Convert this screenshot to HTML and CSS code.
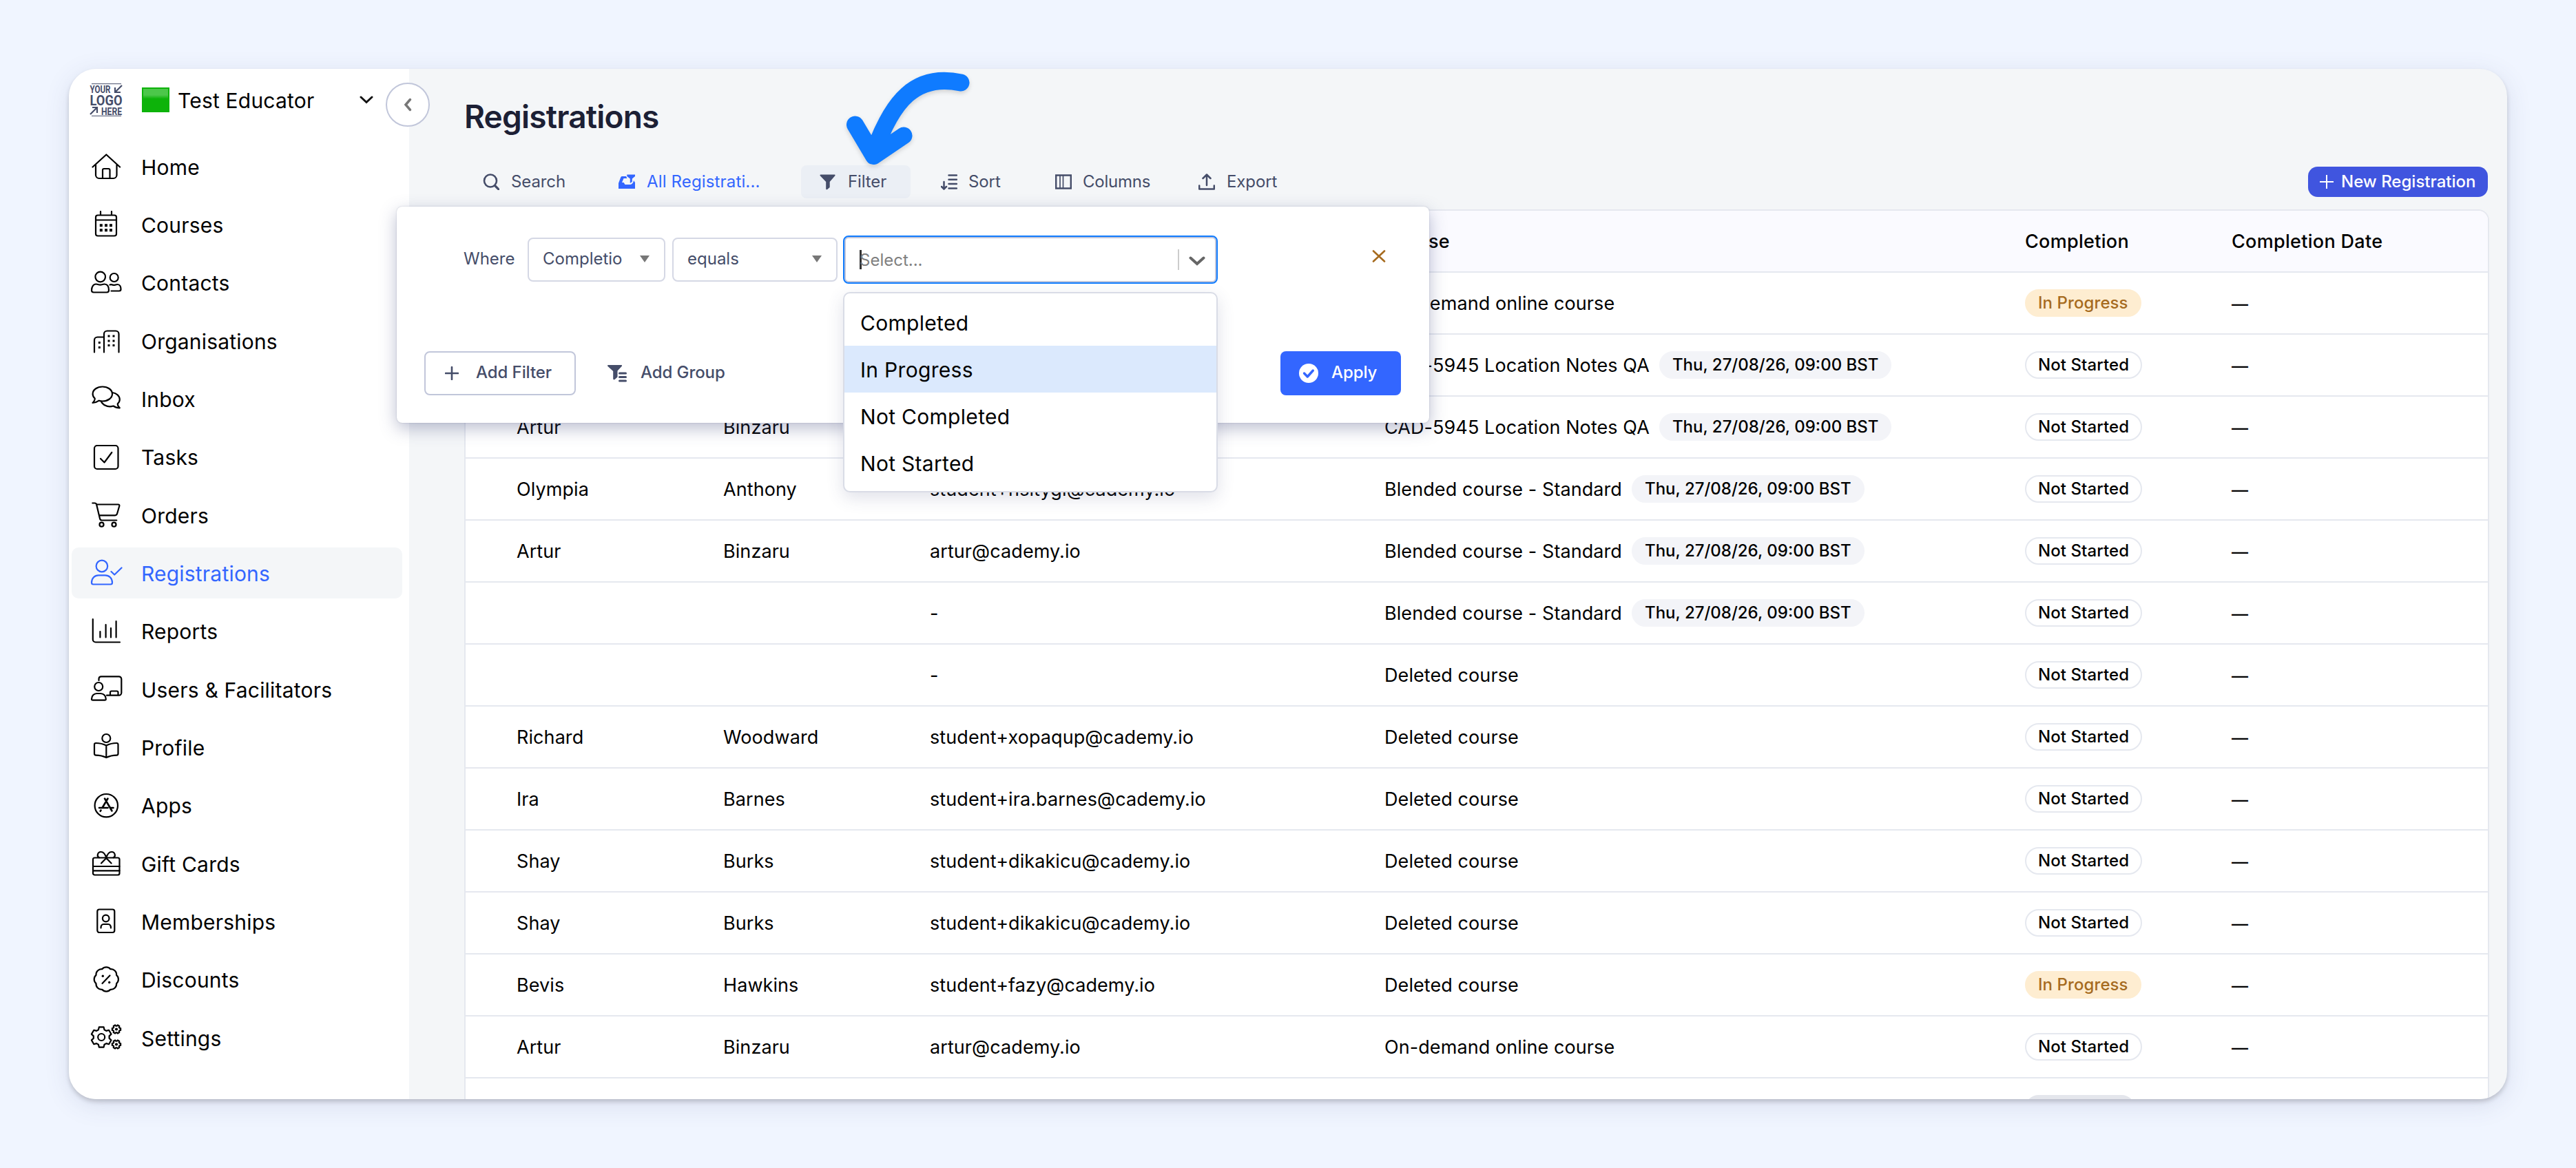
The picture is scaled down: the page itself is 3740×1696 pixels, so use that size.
FILE: index.html
```html
<!DOCTYPE html>
<html lang="en">
<head>
    <meta charset="UTF-8">
    <meta name="viewport" content="width=device-width, initial-scale=1.0">
    <title>Registrations</title>
    <link rel="stylesheet" href="styles.css">
</head>
<body>
    <div class="app">
        <div class="sidebar">
            <div class="brand">
                <svg class="logo" viewBox="0 0 48 48">
                    <path d="M3 .7h43M3 47.300h43" stroke-width="1"/>
                    <text x="0.500" y="14" textLength="30" lengthAdjust="spacingAndGlyphs" font-size="14.500">YOUR</text>
                    <text x="0.500" y="32" textLength="47" lengthAdjust="spacingAndGlyphs" font-size="21">LOGO</text>
                    <text x="17" y="45.500" textLength="30" lengthAdjust="spacingAndGlyphs" font-size="14.500">HERE</text>
                    <path d="M47 3L37 13M37 6v7h8M1 45L11 35M4 35h7v8" stroke-width="2.2"/>
                </svg>
                <span class="flag"></span>
                <span class="brand-name">Test Educator</span>
                <svg class="brand-arrow" viewBox="0 0 20 12"><path d="M2 2l8 7.5L18 2"/></svg>
            </div>
            <div class="nav">
                <div class="nav-item">
                    <svg viewBox="0 0 48 48"><path d="M4.500 24.500L24.300 6.500l19.800 18M9 21v15a5 5 0 0 0 5 5h20.500a5 5 0 0 0 5-5V21M19 41V29a2 2 0 0 1 2-2h6.500a2 2 0 0 1 2 2v12"/></svg>
                    <span>Home</span>
                </div>
                <div class="nav-item">
                    <svg viewBox="0 0 48 48"><rect x="9" y="10.500" width="30" height="30" rx="3"/><path d="M9 17.500h30M16 10V5M32 10V5"/><path d="M14.800 23.300h4v4h-4zM22 23.300h4v4h-4zM29 23.300h4v4h-4zM14.800 30.300h4v4h-4zM22 30.300h4v4h-4zM29 30.300h4v4h-4z" class="solid"/></svg>
                    <span>Courses</span>
                </div>
                <div class="nav-item">
                    <svg viewBox="0 0 48 48"><circle cx="15.700" cy="15" r="7.300"/><circle cx="35.700" cy="16" r="6"/><path d="M3 34.500c0-5 2.500-9 6.500-9 2 0 3.500 1.200 6 1.200s4-1.200 6-1.200c4.500 0 6.500 4 6.500 9 0 2.300-1 3-3 3H6c-2 0-3-.7-3-3zM29.500 26.500c2.500-1 4 .5 6 .5s3-1 5-1c3.500 0 5 3.500 5 7 0 2-1 2.500-2.500 2.500H31.500"/></svg>
                    <span>Contacts</span>
                </div>
                <div class="nav-item">
                    <svg viewBox="0 0 48 48"><path d="M7 40.500V23a4.500 4.500 0 0 1 4.500-4.500H21M21 40.500V14a4.500 4.500 0 0 1 4.500-4.500H38a4.500 4.500 0 0 1 4.500 4.500v26.500"/><path d="M12.800 25h3v3h-3zM12.800 32h3v3h-3zM26.500 15.500h3v3h-3zM33.500 15.500h3v3h-3zM26.500 22.500h3v3h-3zM33.500 22.500h3v3h-3zM26.500 29h3v3h-3zM33.500 29h3v3h-3z" class="solid"/></svg>
                    <span>Organisations</span>
                </div>
                <div class="nav-item">
                    <svg viewBox="0 0 48 48"><path d="M4.500 30c2-2 3.500-4 3.200-6.500C5.700 21.700 4.600 19.500 4.600 17c0-6 6.400-10.500 14.200-10.500S33 11 33 17s-6.400 10.500-14.200 10.500c-1.800 0-3.500-.3-5-.8-2.800 2-6 3.300-9.300 3.300z"/><path d="M33 15c6 .8 10.800 4.800 10.800 10 0 2.500-1 4.500-3 6.300-.2 2 1 4 3 6-3.300 0-6.500-.8-9.300-2.800-5.500 1.800-12.500.5-16-4-.5-.8-1-1.500-1.500-2.700"/></svg>
                    <span>Inbox</span>
                </div>
                <div class="nav-item">
                    <svg viewBox="0 0 48 48"><rect x="7" y="7" width="34.500" height="34" rx="4"/><path d="M16 26l5.500 5.500L32.300 17"/></svg>
                    <span>Tasks</span>
                </div>
                <div class="nav-item">
                    <svg viewBox="0 0 48 48"><path d="M4.300 6.500h3.200c1.500 0 2.300.7 2.600 2L15 29c.4 1.800 1.200 2.500 3 2.500h21.300M10.500 8.500h31c1.600 0 2.200.9 1.800 2.300l-3.200 11c-.5 1.700-1.300 2.500-3 2.500H14"/><circle cx="17.500" cy="37.700" r="3"/><circle cx="35.500" cy="37.700" r="3"/></svg>
                    <span>Orders</span>
                </div>
                <div class="nav-item active">
                    <svg viewBox="0 0 48 48"><circle cx="17.900" cy="14" r="8.300"/><path d="M3 38c0-6.500 4.500-10.700 10-10.700h9.500c6 0 10.500 4.200 10.500 10.700 0 1.800-.8 2.500-2.300 2.500H5.300C3.800 40.500 3 39.800 3 38zM31.500 22l4.700 4.500L46.500 16.500"/></svg>
                    <span>Registrations</span>
                </div>
                <div class="nav-item">
                    <svg viewBox="0 0 48 48"><path d="M4.800 6v29.500a4 4 0 0 0 4 4H44M15.400 24v8.500M23.600 14v18.500M31 19v13.500M38.600 9v23.500"/></svg>
                    <span>Reports</span>
                </div>
                <div class="nav-item">
                    <svg viewBox="0 0 48 48"><circle cx="13.200" cy="20" r="6"/><path d="M3 38c0-4.500 3.300-8 7.500-8h5.500c4.500 0 7.800 3.500 7.800 8 0 1.200-.5 1.700-1.600 1.700H4.600C3.500 39.700 3 39.200 3 38zM13.500 11V8.500A3.500 3.500 0 0 1 17 5.300h25.500a3.800 3.800 0 0 1 3.800 3.700v20a3.800 3.800 0 0 1-3.800 3.700H25M30 32.500V28.500a2 2 0 0 1 2-2h7.500a2 2 0 0 1 2 2v4"/></svg>
                    <span>Users &amp; Facilitators</span>
                </div>
                <div class="nav-item">
                    <svg viewBox="0 0 48 48"><circle cx="24.300" cy="11" r="6"/><path d="M24.300 21.500v17.500M24.300 21.500c-4.500-2.300-9.300-3.500-15-3.500-1.600 0-2.300.8-2.300 2.300v13c0 1.500.7 2.300 2.300 2.300 5.700 0 10.500 1.200 15 3.500 4.500-2.300 9.300-3.500 15-3.500 1.600 0 2.200-.8 2.200-2.300v-13c0-1.500-.6-2.300-2.200-2.300-5.700 0-10.500 1.200-15 3.500z"/></svg>
                    <span>Profile</span>
                </div>
                <div class="nav-item">
                    <svg viewBox="0 0 48 48"><circle cx="24.300" cy="23.700" r="16.700"/><path d="M14 27h12.500M31 27h3.500M26.500 13.500L18.500 27M16.500 30.500l-.8 1.300M22 13.500l10.500 18" stroke-width="2.600"/></svg>
                    <span>Apps</span>
                </div>
                <div class="nav-item">
                    <svg viewBox="0 0 48 48"><rect x="5" y="15.500" width="38.500" height="25" rx="2.500"/><path d="M5 28h38.500M5 34.300h38.500M24.300 16L17 23.500M24.300 16l7.300 7.500M24.300 16c-1-4-3.300-9-7.800-9-5.500 0-6 7.300-2.500 8.300M24.300 16c1-4 3.300-9 7.800-9 5.500 0 6 7.300 2.500 8.300"/></svg>
                    <span>Gift Cards</span>
                </div>
                <div class="nav-item">
                    <svg viewBox="0 0 48 48"><rect x="11.300" y="6.500" width="25" height="33.500" rx="3"/><circle cx="23.700" cy="19.500" r="4.800"/><path d="M16.500 33.500c0-3.500 1.500-5.500 4-5.500h6.500c2.500 0 4 2 4 5.500"/></svg>
                    <span>Memberships</span>
                </div>
                <div class="nav-item">
                    <svg viewBox="0 0 48 48"><path d="M39.100 16.900a8 8 0 0 1 0 12.200a8 8 0 0 1-8.700 8.700a8 8 0 0 1-12.200 0a8 8 0 0 1-8.700-8.700a8 8 0 0 1 0-12.200a8 8 0 0 1 8.700-8.700a8 8 0 0 1 12.200 0a8 8 0 0 1 8.700 8.700zM18.500 29L29.500 17.500"/><circle cx="19.300" cy="18.200" r="1.700" class="solid"/><circle cx="28.700" cy="27.500" r="1.700" class="solid"/></svg>
                    <span>Discounts</span>
                </div>
                <div class="nav-item">
                    <svg viewBox="0 0 48 48">
                        <defs><path id="gear" vector-effect="non-scaling-stroke" d="M-4.300-10.700L-3.400-14.600H3.400L4.300-10.700L7.100-9.100L10.900-10.200L14.300-4.400L11.400-1.600V1.600L14.300 4.400L10.900 10.200L7.100 9.100L4.300 10.700L3.400 14.600H-3.400L-4.300 10.700L-7.100 9.100L-10.900 10.200L-14.300 4.400L-11.400 1.600V-1.600L-14.300-4.400L-10.900-10.200L-7.100-9.100z"/></defs>
                        <use href="#gear" transform="translate(17.200 23)"/><circle cx="17.200" cy="23" r="5"/>
                        <use href="#gear" transform="translate(39 11.500) rotate(30) scale(.42)"/><circle cx="39" cy="11.500" r="1"/>
                        <use href="#gear" transform="translate(39 33.500) rotate(30) scale(.42)"/><circle cx="39" cy="33.500" r="1"/>
                    </svg>
                    <span>Settings</span>
                </div>
            </div>
        </div>

        <div class="main">
            <h1>Registrations</h1>
            <div class="toolbar">
                <button class="tool tool-search">
                    <svg viewBox="0 0 24 24"><circle cx="11" cy="10.500" r="9" fill="none" stroke="currentColor" stroke-width="2.600"/><path d="M17.500 17.500l6 6" stroke="currentColor" stroke-width="3.200" stroke-linecap="round"/></svg>
                    <span>Search</span>
                </button>
                <button class="tool tool-view">
                    <svg viewBox="0 0 24 24"><path d="M5.500 4H11l1.500 3H7.500L5 13h2.500l2 3h6.500c3 0 5.500-2 6-6l2 3v9H0V14L3.300 5.300C3.800 4.300 4.500 4 5.500 4z"/><path d="M12.300 1.500H24V4l-4.200 3.500v4.500l-3 2V7.500L12.300 4z"/></svg>
                    <span>All Registrati...</span>
                </button>
                <button class="tool tool-filter">
                    <svg viewBox="0 0 24 24"><path d="M1.500 1.500h20c1 0 1.400 1 .8 1.800L14.700 12v8l-3.500 3c-1 .7-2 .2-2-1V12L.8 3.300C.2 2.500.5 1.500 1.500 1.500z"/></svg>
                    <span>Filter</span>
                </button>
                <button class="tool tool-sort">
                    <svg viewBox="0 0 24 24"><path d="M11.500 2.500H23M11.500 8.700H23M11.500 15H23M11.500 21.500H23M4.500 12v10M1 19l3.500 3.500L8 19" fill="none" stroke="currentColor" stroke-width="2.500" stroke-linecap="round"/></svg>
                    <span>Sort</span>
                </button>
                <button class="tool tool-columns">
                    <svg viewBox="0 0 24 24"><path d="M1.200 2.500h21.600v19H1.200z" fill="none" stroke="currentColor" stroke-width="2.400"/><path d="M7 2.500v19M11.500 2.500v19" stroke="currentColor" stroke-width="1.700"/></svg>
                    <span>Columns</span>
                </button>
                <button class="tool tool-export">
                    <svg viewBox="0 0 24 24"><path d="M12 17V2M6.500 7L12 1.500 17.500 7M1.200 17.500v5h21.600v-5" fill="none" stroke="currentColor" stroke-width="2.500" stroke-linecap="round" stroke-linejoin="round"/></svg>
                    <span>Export</span>
                </button>
                <button class="new-btn">
                    <svg viewBox="0 0 20 20"><path d="M10 0v20M0 10h20" stroke="currentColor" stroke-width="2"/></svg>
                    <span>New Registration</span>
                </button>
            </div>

            <div class="table">
                <div class="row head"><span>First Name</span><span>Last Name</span><span>Email</span><span>Course</span><span>Completion</span><span>Completion Date</span></div>
                <div class="row"><span></span><span></span><span></span><span>On-demand online course</span><span><b class="pill progress">In Progress</b></span><span class="dash">—</span></div>
                <div class="row"><span></span><span></span><span></span><span>CAD-5945 Location Notes QA<b class="pill date">Thu, 27/08/26, 09:00 BST</b></span><span><b class="pill">Not Started</b></span><span class="dash">—</span></div>
                <div class="row"><span>Artur</span><span>Binzaru</span><span></span><span>CAD-5945 Location Notes QA<b class="pill date">Thu, 27/08/26, 09:00 BST</b></span><span><b class="pill">Not Started</b></span><span class="dash">—</span></div>
                <div class="row"><span>Olympia</span><span>Anthony</span><span>student+hsitygi@cademy.io</span><span>Blended course - Standard<b class="pill date">Thu, 27/08/26, 09:00 BST</b></span><span><b class="pill">Not Started</b></span><span class="dash">—</span></div>
                <div class="row"><span>Artur</span><span>Binzaru</span><span>artur@cademy.io</span><span>Blended course - Standard<b class="pill date">Thu, 27/08/26, 09:00 BST</b></span><span><b class="pill">Not Started</b></span><span class="dash">—</span></div>
                <div class="row"><span></span><span></span><span>-</span><span>Blended course - Standard<b class="pill date">Thu, 27/08/26, 09:00 BST</b></span><span><b class="pill">Not Started</b></span><span class="dash">—</span></div>
                <div class="row"><span></span><span></span><span>-</span><span>Deleted course</span><span><b class="pill">Not Started</b></span><span class="dash">—</span></div>
                <div class="row"><span>Richard</span><span>Woodward</span><span>student+xopaqup@cademy.io</span><span>Deleted course</span><span><b class="pill">Not Started</b></span><span class="dash">—</span></div>
                <div class="row"><span>Ira</span><span>Barnes</span><span>student+ira.barnes@cademy.io</span><span>Deleted course</span><span><b class="pill">Not Started</b></span><span class="dash">—</span></div>
                <div class="row"><span>Shay</span><span>Burks</span><span>student+dikakicu@cademy.io</span><span>Deleted course</span><span><b class="pill">Not Started</b></span><span class="dash">—</span></div>
                <div class="row"><span>Shay</span><span>Burks</span><span>student+dikakicu@cademy.io</span><span>Deleted course</span><span><b class="pill">Not Started</b></span><span class="dash">—</span></div>
                <div class="row"><span>Bevis</span><span>Hawkins</span><span>student+fazy@cademy.io</span><span>Deleted course</span><span><b class="pill progress">In Progress</b></span><span class="dash">—</span></div>
                <div class="row"><span>Artur</span><span>Binzaru</span><span>artur@cademy.io</span><span>On-demand online course</span><span><b class="pill">Not Started</b></span><span class="dash">—</span></div>
                <div class="row"><span></span><span></span><span></span><span></span><span><b class="pill muted"></b></span><span></span></div>
            </div>
        </div>
    </div>

    <!-- Collapse button on the sidebar edge -->
    <button class="collapse">
        <svg viewBox="0 0 12 20"><path d="M9.500 2.500L3 10l6.500 7.500"/></svg>
    </button>

    <!-- Filter popup -->
    <div class="popup">
        <div class="condition">
            <span class="where">Where</span>
            <div class="select field"><span>Completio</span><i class="caret"></i></div>
            <div class="select operator"><span>equals</span><i class="caret"></i></div>
            <div class="combo">
                <span class="cursor"></span>
                <span class="placeholder">Select...</span>
                <span class="divider"></span>
                <svg viewBox="0 0 24 14"><path d="M2.500 2.500L12 11l9.500-8.500"/></svg>
            </div>
            <svg class="remove" viewBox="0 0 20 18"><path d="M2 1.500l16 15M18 1.500l-16 15"/></svg>
        </div>
        <div class="actions">
            <button class="add-filter">
                <svg viewBox="0 0 20 20"><path d="M10 1v18M1 10h18" stroke="currentColor" stroke-width="2.600" stroke-linecap="round"/></svg>
                <span>Add Filter</span>
            </button>
            <button class="add-group">
                <svg viewBox="0 0 28 26"><path d="M1 1h19c1 0 1.300 1 .8 1.700L14.500 9.500v9l-4 3.500c-1 .8-2.300.2-2.300-1V10L.3 2.700C-.2 2 0 1 1 1z"/><path d="M17.500 13h9M17.500 18.500h9M17.500 24h9" stroke="currentColor" stroke-width="3" stroke-linecap="round"/></svg>
                <span>Add Group</span>
            </button>
            <button class="apply">
                <svg viewBox="0 0 28 28"><circle cx="14" cy="14" r="14"/><path d="M7.500 14l4.800 5 8-9" fill="none" stroke="#3366ff" stroke-width="3.400" stroke-linecap="round" stroke-linejoin="round"/></svg>
                <span>Apply</span>
            </button>
        </div>
    </div>

    <!-- Options of the value select -->
    <div class="menu">
        <div class="option">Completed</div>
        <div class="option focused">In Progress</div>
        <div class="option">Not Completed</div>
        <div class="option">Not Started</div>
    </div>

    <svg class="pointer" viewBox="0 0 200 160">
        <path d="M176 23C110 9 76 50 50 124M22.500 84L49.500 129.500L93 100" />
    </svg>
</body>
</html>
```
FILE: styles.css
```css
* {
    box-sizing: border-box;
}
body {
    margin: 0;
    padding: 100px;
    height: 1696px;
    background: #f0f5ff;
    font-family: Inter, sans-serif;
    font-size: 27px;
    color: #000;
    position: relative;
    overflow: hidden;
}
button {
    font: inherit;
    border: none;
    background: none;
    padding: 0;
    cursor: pointer;
}
.app {
    display: flex;
    height: 1496px;
    border-radius: 40px;
    overflow: hidden;
    background: #f4f6f8;
    box-shadow: 0 4px 6px rgba(0, 0, 0, 0.17), 0 8px 36px rgba(60, 70, 120, 0.13);
}

/* Sidebar */
.sidebar {
    width: 494px;
    background: #fff;
    padding: 22px 10px 0 4px;
}
.brand {
    display: flex;
    align-items: center;
    height: 46px;
    padding-left: 26px;
}
.logo {
    width: 48px;
    height: 48px;
    overflow: visible;
    fill: #454d69;
    font-family: Roboto, sans-serif;
    font-weight: 700;
}
.logo path {
    fill: none;
    stroke: #454d69;
}
.flag {
    width: 40px;
    height: 36px;
    margin: 0 12px 0 28px;
    background: linear-gradient(#4cc74a 0, #4cc74a 28%, #0db30a 45%);
    border: 2px solid #0db30a;
}
.brand-name {
    flex: 1;
    padding-top: 2px;
    font-size: 30px;
    letter-spacing: 0.200px;
}
.brand-arrow {
    width: 20px;
    height: 12px;
    margin-right: 42px;
    fill: none;
    stroke: #111;
    stroke-width: 3;
    stroke-linecap: round;
}
.nav {
    display: flex;
    flex-direction: column;
    gap: 10.350px;
    margin-top: 37px;
}
.nav-item {
    display: flex;
    align-items: center;
    gap: 27px;
    height: 74px;
    padding-left: 26px;
    border-radius: 10px;
    font-size: 30px;
    letter-spacing: 0.200px;
}
.nav-item span {
    padding-top: 1px;
}
.nav-item svg {
    width: 48px;
    height: 48px;
    fill: none;
    stroke: currentColor;
    stroke-width: 2.200;
    stroke-linecap: round;
    stroke-linejoin: round;
}
.nav-item svg .solid {
    fill: currentColor;
    stroke: none;
}
.nav-item.active {
    background: #f4f6f8;
    color: #3366ff;
}
.collapse {
    position: absolute;
    left: 560px;
    top: 120px;
    width: 64px;
    height: 64px;
    display: flex;
    align-items: center;
    justify-content: center;
    background: #fff;
    border: 2px solid #c1c6da;
    border-radius: 50%;
}
.collapse svg {
    width: 12px;
    height: 20px;
    fill: none;
    stroke: #777;
    stroke-width: 3.500;
    stroke-linecap: round;
}

/* Main column */
.main {
    flex: 1;
    padding: 40px 26px 0 80px;
}
h1 {
    margin: 0;
    height: 58px;
    line-height: 58px;
    font-size: 46px;
    font-weight: 600;
    letter-spacing: -0.8px;
    color: #1c2035;
}
.toolbar {
    display: flex;
    align-items: center;
    margin-top: 42px;
    height: 48px;
    font-size: 24px;
    color: #454d69;
}
.tool {
    display: flex;
    align-items: center;
    gap: 17px;
    height: 48px;
    padding-left: 27px;
    color: inherit;
    border-radius: 8px;
    letter-spacing: -0.1px;
    white-space: nowrap;
}
.tool span {
    padding-bottom: 2px;
}
.tool svg {
    width: 24px;
    height: 24px;
    fill: currentColor;
}
.tool-search {
    width: 197px;
}
.tool-view {
    width: 292px;
    letter-spacing: 0.150px;
    color: #3366ff;
}
.tool-filter {
    width: 159px;
    background: #ebeff5;
}
.tool-sort {
    width: 166px;
    margin-left: 17px;
    gap: 16px;
}
.tool-columns {
    width: 208px;
    gap: 16px;
    letter-spacing: -0.250px;
}
.new-btn {
    display: flex;
    align-items: center;
    gap: 11px;
    width: 261px;
    height: 44px;
    margin-left: auto;
    margin-right: 2px;
    padding-left: 17px;
    border-radius: 14px;
    background: #4055df;
    color: #fff;
    font-weight: 500;
    white-space: nowrap;
}
.new-btn span {
    padding-bottom: 2px;
}
.new-btn svg {
    width: 20px;
    height: 20px;
}

/* Table */
.table {
    margin-top: 16px;
    height: 1400px;
    border: 2px solid #e5e8ef;
    border-radius: 16px;
    overflow: hidden;
    background: #fff;
}
.row {
    display: grid;
    grid-template-columns: 300px 300px 660px 930px 300px 1fr;
    align-items: center;
    height: 90px;
    padding-left: 74px;
    border-bottom: 2px solid #e5e8ef;
    letter-spacing: 0.080px;
    white-space: nowrap;
}
.row > span {
    display: flex;
    align-items: center;
    padding-top: 1px;
}
.row.head {
    background: #fafaff;
    font-weight: 500;
    letter-spacing: 0.300px;
}
.row .dash {
    font-size: 24px;
    font-weight: 500;
    padding-top: 2px;
}
.pill {
    height: 40px;
    margin-top: -1px;
    line-height: 35px;
    padding: 0 17px;
    border: 2px solid #e5e8ef;
    border-radius: 20px;
    font-size: 24px;
    font-weight: 500;
}
.pill.progress {
    background: #feedd1;
    border-color: #feedd1;
    color: #a66b1f;
}
.pill.date {
    margin-left: 14px;
    letter-spacing: 0;
    background: #f3f4f8;
    border-color: #f3f4f8;
}
.pill.muted {
    width: 160px;
    background: #e4e6ec;
    border-color: #e4e6ec;
}

/* Filter popup */
.popup {
    position: absolute;
    left: 576px;
    top: 300px;
    width: 1499px;
    height: 314px;
    padding: 42px 41px 0 40px;
    background: #fff;
    border-radius: 8px;
    box-shadow: 0 0 2px rgba(40, 50, 90, 0.25), 0 8px 24px rgba(60, 70, 120, 0.35);
    font-size: 24px;
    color: #454d69;
}
.condition {
    display: flex;
    align-items: center;
    height: 70px;
    padding-left: 57px;
}
.where {
    width: 93px;
    padding-bottom: 3px;
}
.select {
    display: flex;
    align-items: center;
    justify-content: space-between;
    height: 64px;
    margin-right: 10px;
    padding: 0 21px 3px 20px;
    border: 2px solid #d5d8e5;
    border-radius: 8px;
}
.select.field {
    width: 200px;
}
.select.operator {
    width: 240px;
    margin-right: 8px;
}
.caret {
    border: 7px solid transparent;
    border-top: 10px solid #777;
    border-bottom: none;
}
.combo {
    display: flex;
    align-items: center;
    width: 544px;
    height: 70px;
    padding: 0 16px 0 22px;
    border: 2px solid #0f7bff;
    border-radius: 8px;
    box-shadow: inset 0 0 0 2px #c1c6da;
}
.cursor {
    width: 3px;
    height: 28px;
    margin-right: -3px;
    background: #333;
}
.placeholder {
    flex: 1;
    color: #808080;
}
.divider {
    width: 2px;
    height: 30px;
    margin-right: 14px;
    background: #ccc;
}
.combo svg {
    width: 24px;
    height: 14px;
    margin-top: 4px;
    fill: none;
    stroke: #666;
    stroke-width: 4;
    stroke-linecap: round;
}
.remove {
    width: 20px;
    height: 18px;
    margin: 0 22px 10px auto;
    stroke: #a66b1f;
    stroke-width: 2.600;
    stroke-linecap: round;
}
.actions {
    display: flex;
    margin-top: 98px;
    height: 64px;
}
.actions button {
    display: flex;
    align-items: center;
    color: inherit;
    border-radius: 8px;
    font-weight: 500;
    letter-spacing: -0.080px;
    white-space: nowrap;
}
.actions svg {
    fill: currentColor;
}
.actions span {
    padding-bottom: 3px;
}
.actions .add-filter {
    width: 220px;
    gap: 25px;
    padding-left: 28px;
    border: 2px solid #c1c6da;
}
.add-filter svg {
    width: 20px;
    height: 20px;
}
.actions .add-group {
    gap: 20px;
    margin-left: 46px;
}
.add-group svg {
    width: 28px;
    height: 26px;
}
.actions .apply {
    width: 175px;
    gap: 19px;
    margin-left: auto;
    padding-left: 27px;
    background: #3366ff;
    color: #fff;
}
.apply svg {
    width: 28px;
    height: 28px;
}

.menu {
    position: absolute;
    left: 1224px;
    top: 424px;
    width: 544px;
    height: 291px;
    padding: 8px 0;
    background: #fff;
    border: 2px solid #d9dce6;
    border-radius: 10px;
    box-shadow: 0 8px 24px rgba(60, 70, 120, 0.16);
}
.option {
    height: 68px;
    line-height: 70px;
    padding-left: 23px;
    font-size: 30px;
    letter-spacing: 0.300px;
}
.option.focused {
    background: #dbe9fd;
}

.pointer {
    position: absolute;
    left: 1219px;
    top: 97px;
    width: 200px;
    height: 160px;
    fill: none;
    stroke: #0f7bff;
    stroke-width: 25;
    stroke-linecap: round;
    stroke-linejoin: round;
    filter: drop-shadow(0 3px 3px rgba(0, 0, 0, 0.15));
}
```
